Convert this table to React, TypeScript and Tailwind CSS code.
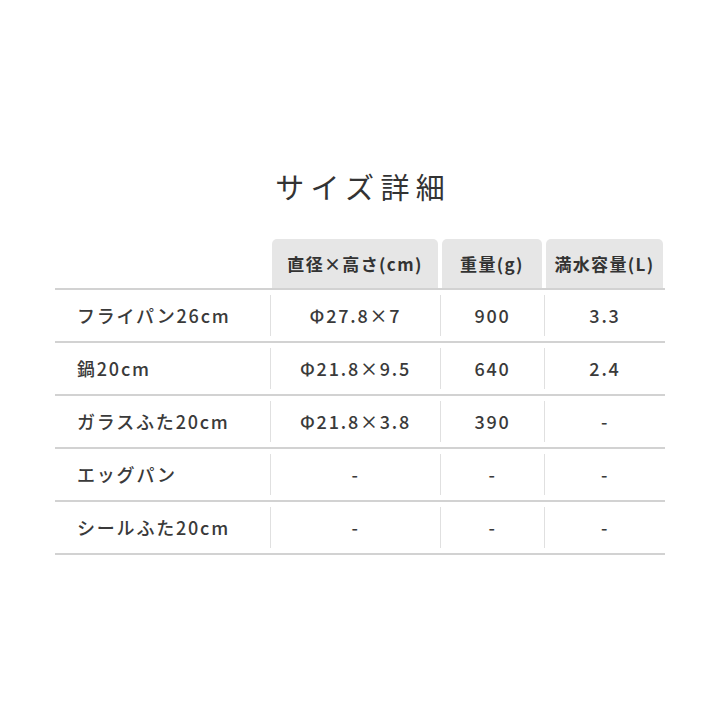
import React from "react";

const rows = [
  ["フライパン26cm", "Φ27.8×7", "900", "3.3"],
  ["鍋20cm", "Φ21.8×9.5", "640", "2.4"],
  ["ガラスふた20cm", "Φ21.8×3.8", "390", "-"],
  ["エッグパン", "-", "-", "-"],
  ["シールふた20cm", "-", "-", "-"],
];

const headers = ["直径×高さ(cm)", "重量(g)", "満水容量(L)"];

export default function App() {
  return (
    <div
      className="w-[720px] h-[720px] bg-white flex flex-col items-center text-[#3a3a3a]"
      style={{ fontFamily: '"Noto Sans CJK JP", "Noto Sans", sans-serif' }}
    >
      <h1 className="mt-[165px] h-[42px] leading-[42px] text-[29px] font-normal tracking-[0.22em] pl-[0.22em] text-[#333]">
        サイズ詳細
      </h1>
      <div className="mt-[32px] w-[610px]">
        <div className="grid grid-cols-[215px_170px_104px_121px] border-b-2 border-[#d2d2d2]">
          <div />
          {headers.map((h) => (
            <div key={h} className="px-[2px]">
              <div className="h-[49px] rounded-t-[5px] bg-[#e6e6e6] flex items-center justify-center text-[17px] font-bold tracking-[0.08em] text-[#333]">
                {h}
              </div>
            </div>
          ))}
        </div>
        {rows.map((r) => (
          <div
            key={r[0]}
            className="grid grid-cols-[215px_170px_104px_121px] h-[53px] border-b-2 border-[#d2d2d2]"
          >
            <div className="flex items-center pl-[22px] text-[18px] font-medium tracking-[0.1em]">{r[0]}</div>
            {r.slice(1).map((c, i) => (
              <div
                key={i}
                className="my-[5px] border-l border-[#e0e0e0] flex items-center justify-center text-[18px] font-medium tracking-[0.1em]"
              >
                {c}
              </div>
            ))}
          </div>
        ))}
      </div>
    </div>
  );
}
